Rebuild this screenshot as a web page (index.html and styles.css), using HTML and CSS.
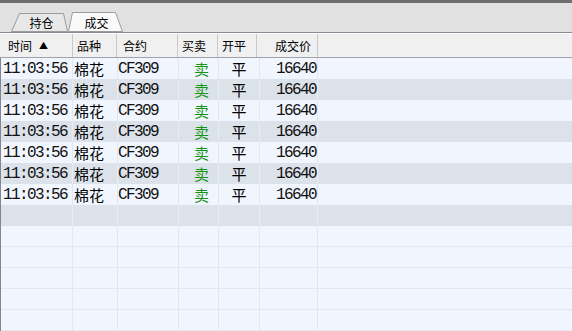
FILE: index.html
```html
<!DOCTYPE html>
<html lang="zh-CN">
<head>
    <meta charset="UTF-8">
    <title>成交</title>
    <link rel="stylesheet" href="styles.css">
</head>
<body>
    <div class="topbar"></div>
    <div class="tabs">
        <div class="tab tab-hold">
            <svg class="tab-shape" width="58" height="20" viewBox="0 0 58 20"><polygon points="1.5,19.5 9.5,1.5 53.5,1.5 57.5,19.5" fill="#e8e8e8" stroke="#9c9c9c"/></svg>
            <span class="tab-text">持仓</span>
        </div>
        <div class="tab tab-deal active">
            <svg class="tab-shape" width="56" height="20" viewBox="0 0 56 20"><polygon points="0.5,19.5 4.5,0.5 47.5,0.5 54.5,19.5" fill="#fafafa" stroke="#9c9c9c"/></svg>
            <span class="tab-text">成交</span>
        </div>
    </div>

    <div class="grid-head">
        <div class="hcell h-time">时间 <span class="sort">▲</span></div>
        <div class="hcell h-kind">品种</div>
        <div class="hcell h-code">合约</div>
        <div class="hcell h-side">买卖</div>
        <div class="hcell h-open">开平</div>
        <div class="hcell h-price">成交价</div>
        <div class="hcell h-rest"></div>
    </div>

    <div class="grid-body">
        <div class="row"><div class="cell c-time">11:03:56</div><div class="cell c-kind">棉花</div><div class="cell c-code">CF309</div><div class="cell c-side">卖</div><div class="cell c-open">平</div><div class="cell c-price">16640</div><div class="cell c-rest"></div></div>
        <div class="row alt"><div class="cell c-time">11:03:56</div><div class="cell c-kind">棉花</div><div class="cell c-code">CF309</div><div class="cell c-side">卖</div><div class="cell c-open">平</div><div class="cell c-price">16640</div><div class="cell c-rest"></div></div>
        <div class="row"><div class="cell c-time">11:03:56</div><div class="cell c-kind">棉花</div><div class="cell c-code">CF309</div><div class="cell c-side">卖</div><div class="cell c-open">平</div><div class="cell c-price">16640</div><div class="cell c-rest"></div></div>
        <div class="row alt"><div class="cell c-time">11:03:56</div><div class="cell c-kind">棉花</div><div class="cell c-code">CF309</div><div class="cell c-side">卖</div><div class="cell c-open">平</div><div class="cell c-price">16640</div><div class="cell c-rest"></div></div>
        <div class="row"><div class="cell c-time">11:03:56</div><div class="cell c-kind">棉花</div><div class="cell c-code">CF309</div><div class="cell c-side">卖</div><div class="cell c-open">平</div><div class="cell c-price">16640</div><div class="cell c-rest"></div></div>
        <div class="row alt"><div class="cell c-time">11:03:56</div><div class="cell c-kind">棉花</div><div class="cell c-code">CF309</div><div class="cell c-side">卖</div><div class="cell c-open">平</div><div class="cell c-price">16640</div><div class="cell c-rest"></div></div>
        <div class="row"><div class="cell c-time">11:03:56</div><div class="cell c-kind">棉花</div><div class="cell c-code">CF309</div><div class="cell c-side">卖</div><div class="cell c-open">平</div><div class="cell c-price">16640</div><div class="cell c-rest"></div></div>
        <div class="row alt"><div class="cell"></div><div class="cell"></div><div class="cell"></div><div class="cell"></div><div class="cell"></div><div class="cell"></div><div class="cell c-rest"></div></div>
        <div class="row blank"><div class="cell"></div><div class="cell"></div><div class="cell"></div><div class="cell"></div><div class="cell"></div><div class="cell"></div><div class="cell c-rest"></div></div>
        <div class="row blank"><div class="cell"></div><div class="cell"></div><div class="cell"></div><div class="cell"></div><div class="cell"></div><div class="cell"></div><div class="cell c-rest"></div></div>
        <div class="row blank"><div class="cell"></div><div class="cell"></div><div class="cell"></div><div class="cell"></div><div class="cell"></div><div class="cell"></div><div class="cell c-rest"></div></div>
        <div class="row blank"><div class="cell"></div><div class="cell"></div><div class="cell"></div><div class="cell"></div><div class="cell"></div><div class="cell"></div><div class="cell c-rest"></div></div>
        <div class="row blank"><div class="cell"></div><div class="cell"></div><div class="cell"></div><div class="cell"></div><div class="cell"></div><div class="cell"></div><div class="cell c-rest"></div></div>
    </div>
</body>
</html>
```

FILE: styles.css
```css
* {
    box-sizing: border-box;
}
html, body {
    margin: 0;
    width: 572px;
    height: 331px;
    overflow: hidden;
    background: #f1f6fe;
    font-family: "Noto Sans CJK SC", "DejaVu Sans", sans-serif;
    color: #000;
}
.topbar {
    height: 3px;
    background: #6e6e6e;
}
.tabs {
    display: flex;
    align-items: flex-end;
    height: 30px;
    padding-left: 10px;
    background: #e1e1e1;
    border-bottom: 1px solid #8a8a96;
}
.tab {
    position: relative;
    height: 20px;
    display: flex;
    align-items: center;
    justify-content: center;
    font-size: 12px;
    line-height: 1;
}
.tab-hold {
    width: 58px;
    padding-left: 5px;
}
.tab-deal {
    width: 56px;
    padding-left: 1px;
}
.tab-shape {
    position: absolute;
    left: 0;
    top: 0;
}
.tab-text {
    position: relative;
    padding-top: 1px;
}

.grid-head {
    display: grid;
    grid-template-columns: 73px 44px 61px 40px 39px 61px 1fr;
    height: 25px;
    background: #f0f0f0;
    border-top: 1px solid #ffffff;
    border-bottom: 1px solid #a2a2ae;
    font-size: 12px;
}
.hcell {
    display: flex;
    align-items: center;
    border-right: 1px solid #c9c9c9;
    padding-left: 4px;
    white-space: nowrap;
}
.h-time {
    padding-left: 8px;
}
.h-code {
    padding-left: 6px;
}
.h-price {
    justify-content: flex-end;
    padding-right: 6px;
}
.h-rest {
    border-right: none;
}
.sort {
    font-size: 9px;
    margin-left: 7px;
}

.grid-body {
    border-left: 1px solid #858590;
}
.row {
    display: grid;
    grid-template-columns: 72px 45px 61px 40px 41px 58px 1fr;
    height: 21px;
    background: #f1f6fe;
}
.row.alt {
    background: #dce2ea;
}
.row.blank {
    border-bottom: 1px solid #e3e8f0;
}
.cell {
    display: flex;
    align-items: center;
    border-right: 1px solid #e1e7ef;
    white-space: nowrap;
    line-height: 1;
}
.row.alt .cell {
    border-right-color: #e9edf2;
}
.cell.c-rest {
    border-right: none;
}
.c-time,
.c-code,
.c-price {
    font-family: "Liberation Mono", monospace;
    font-size: 16px;
    letter-spacing: -1.6px;
    color: #111;
}
.c-time {
    padding-left: 2px;
}
.c-code {
    padding-left: 0;
}
.c-price {
    justify-content: flex-end;
    padding-right: 1px;
}
.c-kind,
.c-side,
.c-open {
    font-size: 15px;
}
.c-kind {
    padding-left: 1px;
}
.c-side {
    justify-content: center;
    padding-left: 6px;
    color: #169416;
}
.c-open {
    justify-content: center;
}
```
